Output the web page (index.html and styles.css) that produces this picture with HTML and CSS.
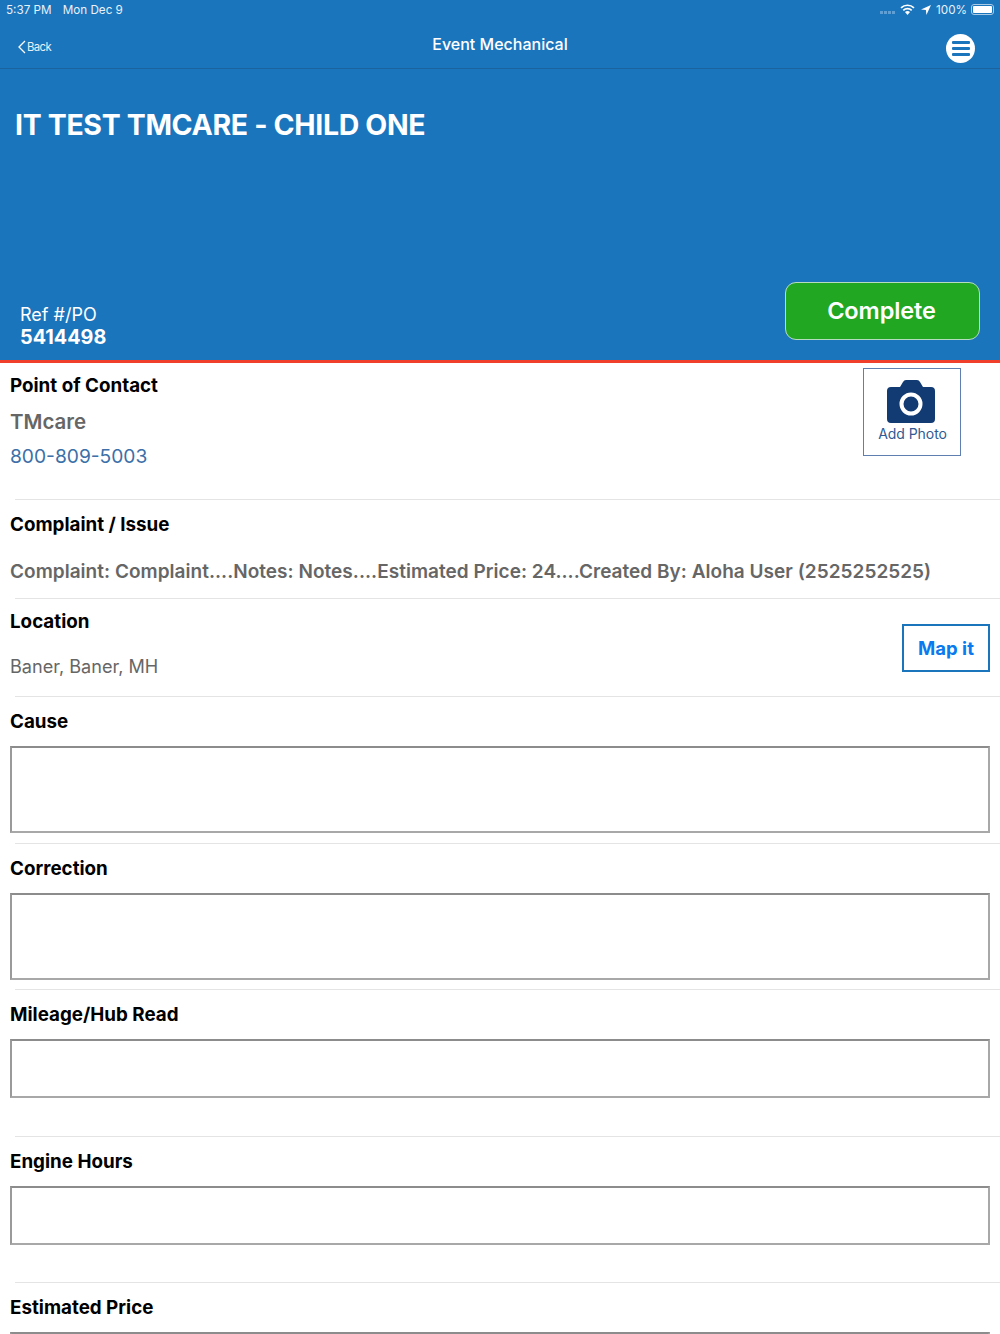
FILE: index.html
```html
<!DOCTYPE html>
<html lang="en">
<head>
    <meta charset="UTF-8">
    <meta name="viewport" content="width=device-width, initial-scale=1.0">
    <title>Event Mechanical</title>
    <link rel="stylesheet" href="styles.css">
</head>
<body>
    <div class="top-bar">
        <div class="status-bar">
            <span class="status-time">5:37 PM</span>
            <span class="status-date">Mon Dec 9</span>
            <span class="status-right">
                <span class="signal-dots"><i></i><i></i><i></i><i></i></span>
                <svg class="wifi" width="15" height="11" viewBox="0 0 15 11">
                    <path d="M7.5 11 L5 8.1 A3.6 3.6 0 0 1 10 8.1 Z" fill="#fff"/>
                    <path d="M3.3 6.3 A6.2 6.2 0 0 1 11.7 6.3" fill="none" stroke="#fff" stroke-width="1.7"/>
                    <path d="M1 3.8 A9.6 9.6 0 0 1 14 3.8" fill="none" stroke="#fff" stroke-width="1.7"/>
                </svg>
                <svg class="arrow" width="10" height="10" viewBox="0 0 10 10">
                    <path d="M10 0 L0 4.6 L4.9 5.1 L5.4 10 Z" fill="#fff"/>
                </svg>
                <span class="status-pct">100%</span>
                <span class="battery"><span class="battery-fill"></span></span>
            </span>
        </div>
        <div class="nav-bar">
            <a class="back-link">
                <svg width="8" height="14" viewBox="0 0 8 14"><path d="M7 1 L1 7 L7 13" fill="none" stroke="#fff" stroke-width="1.3"/></svg>
                <span>Back</span>
            </a>
            <div class="nav-title">Event Mechanical</div>
            <div class="menu-btn"><i></i><i></i><i></i></div>
        </div>
    </div>

    <div class="hero">
        <h1>IT TEST TMCARE - CHILD ONE</h1>
        <div class="hero-bottom">
            <div class="ref">
                <div class="ref-label">Ref #/PO</div>
                <div class="ref-number">5414498</div>
            </div>
            <button type="button" class="complete-btn">Complete</button>
        </div>
    </div>

    <div class="section contact">
        <div>
            <div class="label">Point of Contact</div>
            <div class="contact-name">TMcare</div>
            <div class="contact-phone">800-809-5003</div>
        </div>
        <div class="add-photo">
            <svg width="50" height="44" viewBox="0 0 50 44">
                <path d="M5 7 H14 L17 2 Q18 0 20 0 H31 Q33 0 34 2 L37 7 H45 Q49 7 49 11 V39 Q49 43 45 43 H5 Q1 43 1 39 V11 Q1 7 5 7 Z" fill="#123a73"/>
                <circle cx="25" cy="24" r="9.5" fill="none" stroke="#fff" stroke-width="4"/>
            </svg>
            <span>Add Photo</span>
        </div>
    </div>

    <div class="section complaint">
        <div class="label">Complaint / Issue</div>
        <div class="complaint-text">Complaint: Complaint....Notes: Notes....Estimated Price: 24....Created By: Aloha User (2525252525)</div>
    </div>

    <div class="section location">
        <div>
            <div class="label">Location</div>
            <div class="location-text">Baner, Baner, MH</div>
        </div>
        <button type="button" class="map-btn">Map it</button>
    </div>

    <div class="section field field-tall">
        <div class="label">Cause</div>
        <div class="input-box"></div>
    </div>
    <div class="section field field-tall">
        <div class="label">Correction</div>
        <div class="input-box"></div>
    </div>
    <div class="section field">
        <div class="label">Mileage/Hub Read</div>
        <div class="input-box"></div>
    </div>
    <div class="section field">
        <div class="label">Engine Hours</div>
        <div class="input-box"></div>
    </div>
    <div class="section field field-last">
        <div class="label">Estimated Price</div>
        <div class="input-box"></div>
    </div>
</body>
</html>
```

FILE: styles.css
```css
html, body {
    margin: 0;
    height: 1334px;
    overflow: hidden;
}

body {
    font-family: Inter, "Liberation Sans", sans-serif;
    background-color: #fff;
    color: #000;
}

.top-bar {
    height: 69px;
    box-sizing: border-box;
    background-color: #1b75bc;
    border-bottom: 1px solid #1a639f;
    color: #fff;
}

.status-bar {
    height: 19px;
    display: flex;
    align-items: center;
    padding: 0 6px 0 6px;
    font-size: 11.7px;
    color: #e9f1f8;
}

.status-date {
    margin-left: 11px;
}

.status-right {
    margin-left: auto;
    display: flex;
    align-items: center;
}

.signal-dots {
    display: flex;
    gap: 1px;
    margin-right: 5px;
    margin-top: 5px;
}

.signal-dots i {
    width: 3px;
    height: 3px;
    background: #5f9fd3;
}

.arrow {
    margin-left: 6px;
}

.status-pct {
    margin-left: 5px;
}

.battery {
    width: 19px;
    height: 7px;
    margin-left: 4px;
    padding: 1px;
    border: 1px solid #a9cbe6;
    border-radius: 3px;
    display: block;
}

.battery-fill {
    display: block;
    height: 100%;
    background: #fff;
    border-radius: 1px;
}

.nav-bar {
    height: 49px;
    position: relative;
    display: flex;
    align-items: center;
    justify-content: center;
}

.back-link {
    position: absolute;
    left: 18px;
    top: 21px;
    display: flex;
    align-items: center;
    gap: 1px;
    font-size: 11.3px;
    letter-spacing: -0.6px;
    color: #e9f1f8;
}

.nav-title {
    font-size: 16px;
    font-weight: 500;
    margin-top: 1px;
}

.menu-btn {
    position: absolute;
    right: 25px;
    top: 15px;
    width: 29px;
    height: 29px;
    border-radius: 50%;
    background: #fff;
    display: flex;
    flex-direction: column;
    align-items: center;
    justify-content: center;
    gap: 3px;
}

.menu-btn i {
    width: 18px;
    height: 3px;
    background: #1b75bc;
    border-radius: 1px;
}

.hero {
    height: 291px;
    background-color: #1b75bc;
    border-bottom: 3px solid #f0402b;
    display: flex;
    flex-direction: column;
    justify-content: space-between;
    color: #fff;
}

.hero h1 {
    margin: 38px 0 0 15px;
    font-size: 28.5px;
    line-height: 36px;
    font-weight: 700;
    letter-spacing: -0.35px;
}

.hero-bottom {
    display: flex;
    justify-content: space-between;
    align-items: flex-end;
    padding: 0 20px 11px 20px;
}

.ref {
    font-size: 18px;
    line-height: 23px;
}

.ref-number {
    font-size: 19.8px;
    font-weight: 700;
}

.complete-btn {
    width: 195px;
    height: 58px;
    margin-bottom: 9px;
    padding: 0 2px 2px 0;
    background-color: #22a722;
    border: 1px solid #b6dcc0;
    border-radius: 11px;
    color: #fff;
    font-family: inherit;
    font-size: 23.5px;
    font-weight: 600;
    letter-spacing: -0.1px;
}

.section {
    position: relative;
    box-sizing: border-box;
    padding: 0 10px;
}

.section::after {
    content: "";
    position: absolute;
    left: 15px;
    right: 0;
    bottom: 0;
    height: 1px;
    background: #e4e4e4;
}

.label {
    padding-top: 1px;
    margin-bottom: -1px;
    font-size: 18.8px;
    line-height: 24px;
    font-weight: 700;
}

.contact {
    height: 137px;
    display: flex;
    justify-content: space-between;
    padding-top: 10px;
}

.contact-name {
    margin-top: 12px;
    font-size: 20.5px;
    line-height: 26px;
    font-weight: 600;
    color: #666;
}

.contact-phone {
    margin-top: 8px;
    font-size: 19.2px;
    line-height: 26px;
    color: #3b70a8;
}

.add-photo {
    width: 98px;
    height: 88px;
    box-sizing: border-box;
    margin: -5px 29px 0 0;
    border: 1px solid #5f7fb0;
    display: flex;
    flex-direction: column;
    align-items: center;
    padding-top: 11px;
    font-size: 14px;
    letter-spacing: -0.05px;
    color: #2f5a94;
}

.add-photo span {
    margin-left: 1px;
}

.add-photo svg {
    margin-left: -3px;
    margin-bottom: 1px;
}

.complaint {
    height: 99px;
    padding-top: 12px;
}

.complaint-text {
    margin-top: 24px;
    font-size: 19px;
    letter-spacing: 0.03px;
    line-height: 24px;
    font-weight: 600;
    color: #666;
    white-space: nowrap;
}

.location {
    height: 98px;
    display: flex;
    justify-content: space-between;
    padding-top: 10px;
}

.location-text {
    margin-top: 21px;
    font-size: 18.1px;
    line-height: 24px;
    color: #666;
}

.map-btn {
    width: 88px;
    height: 48px;
    margin-top: 15px;
    background: #fff;
    border: 2px solid #1b75bc;
    color: #0a7aef;
    font-family: inherit;
    font-size: 18.5px;
    font-weight: 700;
}

.field {
    height: 146.5px;
    padding-top: 12px;
}

.input-box {
    height: 59px;
    margin-top: 13px;
    box-sizing: border-box;
    border: 2px solid #a8a8a8;
    border-top-color: #8c8c8c;
    border-left-color: #9a9a9a;
}

.field-tall .input-box {
    height: 87px;
}

.field-last {
    height: 51px;
    overflow: hidden;
}

.field-last::after {
    display: none;
}
```
